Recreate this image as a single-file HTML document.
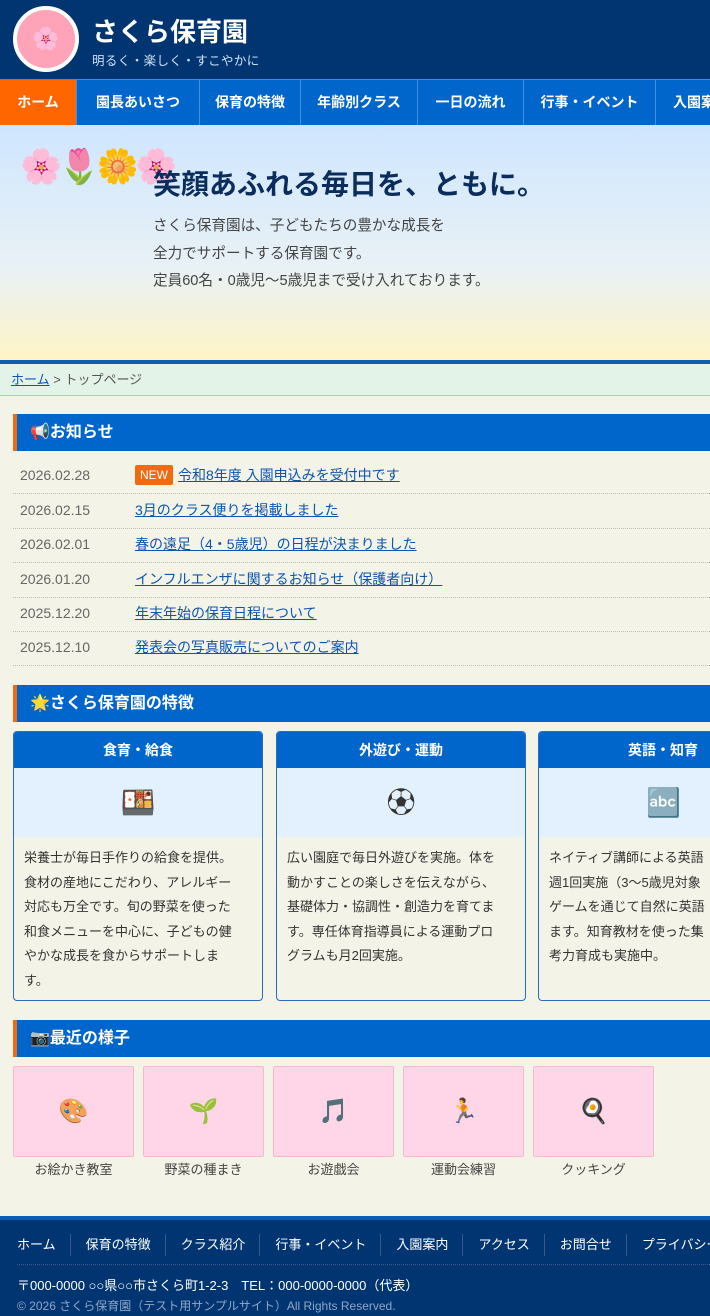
<!DOCTYPE html>
<html><head><meta charset="utf-8"><style>
*{margin:0;padding:0;box-sizing:border-box}
html,body{overflow:hidden}
body{width:710px;height:1316px;overflow:hidden;background:#f4f3e8;font-family:"Liberation Sans","Noto Sans CJK JP",sans-serif;color:#333;position:relative}
.hd{position:absolute;left:0;top:0;width:710px;height:79px;background:#003571}
.logo{position:absolute;left:13px;top:6px;width:66px;height:66px;border-radius:50%;background:#ffa3b8;border:4px solid #fff;text-align:center;line-height:58px;font-size:22px}
.t1{position:absolute;left:92px;top:12px;font-size:26px;font-weight:bold;color:#fff;white-space:nowrap}
.t2{position:absolute;left:92px;top:50px;font-size:12.5px;letter-spacing:0.4px;color:#cfe0f5;white-space:nowrap}
.nav{position:absolute;left:0;top:79px;height:46px;width:710px;background:#0066cc;border-top:1px solid #3a8ae0;white-space:nowrap;overflow:hidden}
.nav span{position:absolute;top:0;height:45px;line-height:45px;text-align:center;font-size:14px;font-weight:bold;color:#fff;border-right:1px solid #3d8fe6}
.hero{position:absolute;left:0;top:125px;width:710px;height:236px;background:linear-gradient(#cfe6ff,#e8f1f5 60%,#fff4c6)}
.em{position:absolute;left:20px;top:22px;font-size:34px;letter-spacing:-4px}
.h1{position:absolute;left:153px;top:38px;font-size:28px;font-weight:bold;color:#0b2d5e;white-space:nowrap}
.hp{position:absolute;left:153px;top:88px;font-size:14.6px;line-height:27.5px;color:#444;white-space:nowrap}
.bl{position:absolute;left:0;top:360px;width:710px;height:4px;background:#0f5fae}
.bc{position:absolute;left:0;top:364px;width:710px;height:32px;background:#e4f3e8;border-bottom:1px solid #a6d6a6;font-size:13px;line-height:31px;padding-left:11px;color:#555}
a{color:#0b55b0;text-decoration:underline}
.sh{position:absolute;left:13px;width:697px;height:37px;background:#0066cc;border-left:4px solid #f26a10;color:#fff;font-size:16px;font-weight:bold;line-height:37px;padding-left:13px}
.row{position:absolute;left:13px;width:697px;height:34.5px;border-bottom:1px dotted #bbb;font-size:14px;line-height:33px;white-space:nowrap}
.row .d{position:absolute;left:7px;color:#666}
.row .l{position:absolute;left:122px}
.new{display:inline-block;background:#f26a10;color:#fff;font-size:12px;line-height:20px;padding:0 5px;margin-right:5px;border-radius:2px;vertical-align:1px}
.clip{position:absolute;left:0;top:0;width:710px;height:1316px;overflow:hidden}
.card{position:absolute;top:731px;width:250px;height:270px;border:1px solid #2a6bbf;border-radius:4px;overflow:hidden;background:#f4f3e8}
.card .ch{height:36px;background:#0066cc;color:#fff;font-size:14px;font-weight:bold;text-align:center;line-height:36px}
.card .ci{height:69px;background:#e3f0fe;text-align:center;line-height:69px;font-size:28px}
.card .ct{padding:9px 10px;font-size:13px;line-height:24.5px;color:#333;white-space:nowrap}
.th{position:absolute;top:1066px;width:121px;height:91px;background:#ffd6e8;border:1px solid #f5b8cf;border-radius:2px;text-align:center;line-height:89px;font-size:24px}
.cap{position:absolute;top:1159px;width:121px;text-align:center;font-size:13px;color:#444}
.ft{position:absolute;left:0;top:1216px;width:710px;height:100px;background:#003571;border-top:4px solid #0a5db5;color:#fff;overflow:hidden}
.fn{position:absolute;left:0;top:14px;white-space:nowrap;font-size:13px}
.fn span{display:inline-block;padding:0 14px 0 15px;border-right:1px solid #36598a;line-height:22px}
.fn span:first-child{padding-left:17px}
.fl{position:absolute;left:17px;top:44px;width:693px;border-top:1px dotted #3a5c8c}
.ad{position:absolute;left:17px;top:55px;font-size:13px;white-space:nowrap}
.cp{position:absolute;left:17px;top:77px;font-size:12px;color:#8fa6c8;white-space:nowrap}
</style></head><body><div class="clip">
<div class="hd"><div class="logo">🌸</div><div class="t1">さくら保育園</div><div class="t2">明るく・楽しく・すこやかに</div></div>
<div class="nav">
<span style="left:0;width:77px;background:#ff6600">ホーム</span>
<span style="left:77px;width:123px">園長あいさつ</span>
<span style="left:200px;width:101px">保育の特徴</span>
<span style="left:301px;width:117px">年齢別クラス</span>
<span style="left:418px;width:106px">一日の流れ</span>
<span style="left:524px;width:132px">行事・イベント</span>
<span style="left:656px;width:54px;text-align:left;padding-left:17px;border-right:0">入園案内</span>
</div>
<div class="hero"><div class="em">🌸🌷🌼🌸</div><div class="h1">笑顔あふれる毎日を、ともに。</div>
<div class="hp">さくら保育園は、子どもたちの豊かな成長を<br>全力でサポートする保育園です。<br>定員60名・0歳児〜5歳児まで受け入れております。</div></div>
<div class="bl"></div>
<div class="bc"><a>ホーム</a> &gt; トップページ</div>
<div class="sh" style="top:414px">📢お知らせ</div>
<div class="row" style="top:459px"><span class="d">2026.02.28</span><span class="l"><span class="new">NEW</span><a>令和8年度 入園申込みを受付中です</a></span></div>
<div class="row" style="top:494px"><span class="d">2026.02.15</span><span class="l"><a>3月のクラス便りを掲載しました</a></span></div>
<div class="row" style="top:528px"><span class="d">2026.02.01</span><span class="l"><a>春の遠足（4・5歳児）の日程が決まりました</a></span></div>
<div class="row" style="top:563px"><span class="d">2026.01.20</span><span class="l"><a>インフルエンザに関するお知らせ（保護者向け）</a></span></div>
<div class="row" style="top:597px"><span class="d">2025.12.20</span><span class="l"><a>年末年始の保育日程について</a></span></div>
<div class="row" style="top:631px"><span class="d">2025.12.10</span><span class="l"><a>発表会の写真販売についてのご案内</a></span></div>
<div class="sh" style="top:685px">🌟さくら保育園の特徴</div>
<div class="card" style="left:13px"><div class="ch">食育・給食</div><div class="ci">🍱</div><div class="ct">栄養士が毎日手作りの給食を提供。<br>食材の産地にこだわり、アレルギー<br>対応も万全です。旬の野菜を使った<br>和食メニューを中心に、子どもの健<br>やかな成長を食からサポートしま<br>す。</div></div>
<div class="card" style="left:276px"><div class="ch">外遊び・運動</div><div class="ci">⚽</div><div class="ct">広い園庭で毎日外遊びを実施。体を<br>動かすことの楽しさを伝えながら、<br>基礎体力・協調性・創造力を育てま<br>す。専任体育指導員による運動プロ<br>グラムも月2回実施。</div></div>
<div class="card" style="left:538px;width:172px;border-right:0;border-radius:4px 0 0 4px"><div class="ch" style="text-align:left;padding-left:89px">英語・知育</div><div class="ci" style="text-align:left;padding-left:107px">🔤</div><div class="ct">ネイティブ講師による英語<br>週1回実施（3〜5歳児対象<br>ゲームを通じて自然に英語<br>ます。知育教材を使った集<br>考力育成も実施中。</div></div>
<div class="sh" style="top:1020px">📷最近の様子</div>
<div class="th" style="left:13px">🎨</div><div class="cap" style="left:13px">お絵かき教室</div>
<div class="th" style="left:143px">🌱</div><div class="cap" style="left:143px">野菜の種まき</div>
<div class="th" style="left:273px">🎵</div><div class="cap" style="left:273px">お遊戯会</div>
<div class="th" style="left:403px">🏃</div><div class="cap" style="left:403px">運動会練習</div>
<div class="th" style="left:533px">🍳</div><div class="cap" style="left:533px">クッキング</div>
<div class="ft">
<div class="fn"><span>ホーム</span><span>保育の特徴</span><span>クラス紹介</span><span>行事・イベント</span><span>入園案内</span><span>アクセス</span><span>お問合せ</span><span>プライバシー</span></div>
<div class="fl"></div>
<div class="ad">〒000-0000 ○○県○○市さくら町1-2-3　TEL：000-0000-0000（代表）</div>
<div class="cp">© 2026 さくら保育園（テスト用サンプルサイト）All Rights Reserved.</div>
</div>
</div></body></html>
